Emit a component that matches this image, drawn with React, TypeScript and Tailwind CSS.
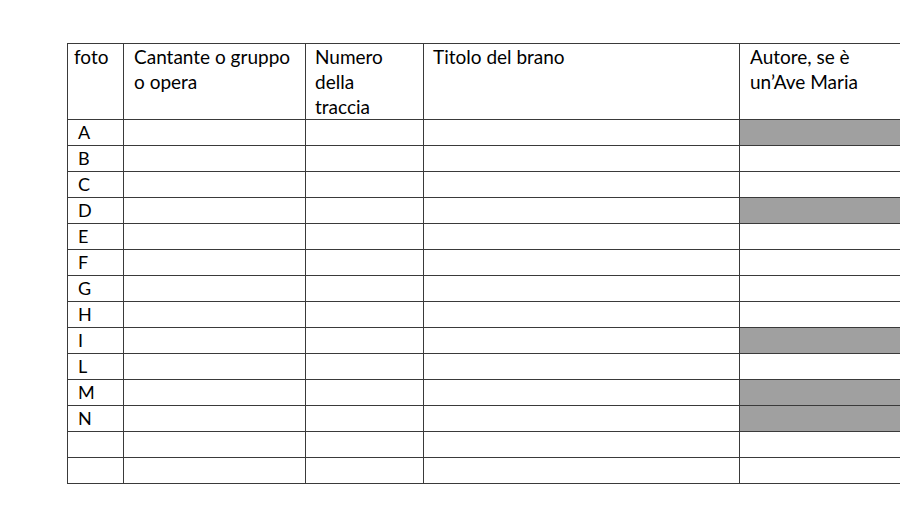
import React from "react";

const letters = ["A", "B", "C", "D", "E", "F", "G", "H", "I", "L", "M", "N", "", ""];
const shaded = new Set(["A", "D", "I", "M", "N"]);

export default function App() {
  return (
    <div
      className="w-[900px] h-[506px] overflow-hidden bg-white text-black"
      style={{ fontFamily: "Lato, 'Open Sans', sans-serif" }}
    >
      <div className="pt-[43px] pl-[67px]">
        <div className="grid grid-cols-[56px_182px_118px_316px_170px] w-max border-t border-l border-[#3a3a3a]">
          <div className="h-[76px] border-r border-b border-[#3a3a3a] pl-[6px] text-[19px] leading-[25px]">foto</div>
          <div className="h-[76px] border-r border-b border-[#3a3a3a] pl-[10px] text-[19px] leading-[25px]">
            Cantante o gruppo
            <br />o opera
          </div>
          <div className="h-[76px] border-r border-b border-[#3a3a3a] pl-[9px] text-[19px] leading-[25px]">
            Numero
            <br />
            della
            <br />
            traccia
          </div>
          <div className="h-[76px] border-r border-b border-[#3a3a3a] pl-[9px] text-[19px] leading-[25px]">Titolo del brano</div>
          <div className="h-[76px] border-r border-b border-[#3a3a3a] pl-[10px] text-[19px] leading-[25px]">
            Autore, se è
            <br />
            un’Ave Maria
          </div>
          {letters.map((l, i) => (
            <React.Fragment key={i}>
              <div className="h-[26px] border-r border-b border-[#3a3a3a] pl-[10px] text-[18px] leading-[24px]">{l}</div>
              <div className="h-[26px] border-r border-b border-[#3a3a3a]" />
              <div className="h-[26px] border-r border-b border-[#3a3a3a]" />
              <div className="h-[26px] border-r border-b border-[#3a3a3a]" />
              <div
                className={
                  shaded.has(l)
                    ? "h-[26px] border-r border-b border-[#3a3a3a] bg-[#a0a0a0]"
                    : "h-[26px] border-r border-b border-[#3a3a3a]"
                }
              />
            </React.Fragment>
          ))}
        </div>
      </div>
    </div>
  );
}
